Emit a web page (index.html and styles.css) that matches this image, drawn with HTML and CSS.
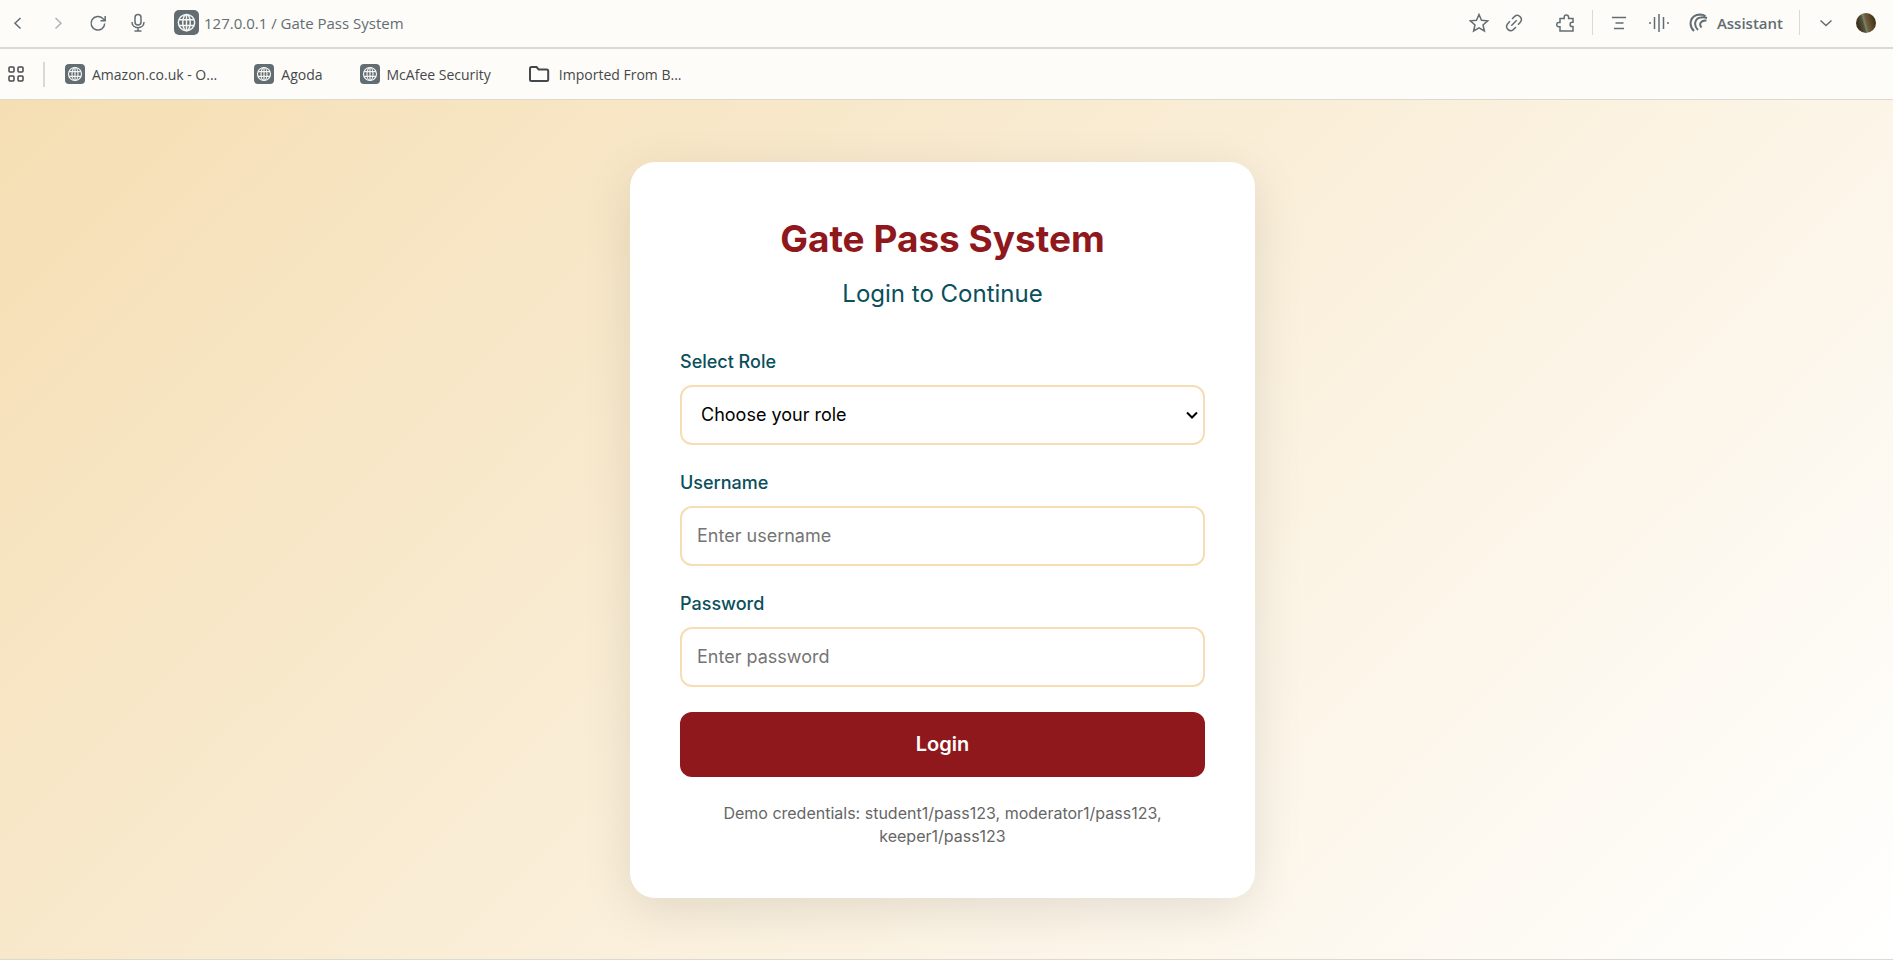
FILE: index.html
```html
<!DOCTYPE html>
<html lang="en">
<head>
<meta charset="utf-8">
<title>Gate Pass System</title>
<link rel="stylesheet" href="styles.css">
</head>
<body>
<svg class="defs" aria-hidden="true">
  <symbol id="globe" viewBox="0 0 20 20">
    <rect width="20" height="20" rx="4" fill="#626d73"/>
    <g fill="none" stroke="#f4f4f1" stroke-width="1.2">
      <circle cx="10" cy="10" r="6.5"/>
      <ellipse cx="10" cy="10" rx="3" ry="6.5"/>
      <path d="M10 3.5v13M4 7.7h12M4 12.3h12"/>
    </g>
  </symbol>
</svg>

<header class="browser">
  <div class="toolbar">
    <nav class="nav-buttons" aria-label="Navigation">
      <button class="icon-button" type="button" aria-label="Back"><svg viewBox="0 0 20 20"><path d="M12.500 5 7 10.200l5.500 5.300"/></svg></button>
      <button class="icon-button is-disabled" type="button" aria-label="Forward"><svg viewBox="0 0 20 20"><path d="m7.500 5 5.500 5.200-5.500 5.300"/></svg></button>
      <button class="icon-button" type="button" aria-label="Reload"><svg viewBox="0 0 20 20"><path d="M16.700 10.500A6.800 6.800 0 1 1 14.800 5.500L17 7.300M17.200 3v4.700h-4.700"/></svg></button>
      <button class="icon-button" type="button" aria-label="Voice search"><svg viewBox="0 0 20 20"><rect x="7" y="1.500" width="6" height="10.500" rx="3"/><path d="M4 9c0 7.500 12 7.500 12 0M10 14.800v3M6.500 18h7"/></svg></button>
    </nav>
    <div class="address">
      <svg class="site-icon"><use href="#globe"/></svg>
      <span>127.0.0.1 / Gate Pass System</span>
    </div>
    <div class="tools">
      <button class="icon-button star" type="button" aria-label="Bookmark"><svg viewBox="0 0 20 20"><path d="m10 1.500 2.500 5.700 6.200.6-4.700 4.100 1.400 6.100L10 14.800 4.600 18 6 11.900 1.300 7.800l6.200-.6z"/></svg></button>
      <button class="icon-button link" type="button" aria-label="Copy link"><svg viewBox="0 0 20 20"><path d="m7.300 12.700 5.400-5.400M8 6l2.700-2.600c3.600-3 8.600 1.700 5.800 5.600L14 11.700M6 8.300 3.500 11c-2.800 3.900 2 8.600 5.800 5.600L12 14"/></svg></button>
      <button class="icon-button puzzle" type="button" aria-label="Extensions"><svg viewBox="0 0 20 20"><path d="M4 5.500h4.200V4.200a2.200 2.200 0 0 1 4.400 0v1.300H17v3.800h-.8a2.100 2.100 0 0 0 0 4.200h.8V18H4v-4.200H2.800a2.100 2.100 0 0 1 0-4.200H4z"/></svg></button>
      <span class="divider"></span>
      <button class="icon-button lines" type="button" aria-label="Summarize"><svg viewBox="0 0 20 20"><path d="M3 4.500h14M6.500 10h8M5 15.500h10"/></svg></button>
      <button class="icon-button wave" type="button" aria-label="Voice"><svg viewBox="0 0 20 20"><path d="M10 1v18M5.500 4v12M14.500 4v12M1 9v2M19 9v2"/></svg></button>
      <button class="assistant" type="button">
        <svg viewBox="0 0 20 20"><path d="M5 18C-1 12 1 2 11 1.500q3 0 5.500 1.500M9 17C4 12 6 5 12 4.500q3-.5 6 .5M12.500 14.500C9.500 11 12 7 17.500 7.500"/></svg>
        Assistant
      </button>
      <span class="divider"></span>
      <button class="icon-button more" type="button" aria-label="More"><svg viewBox="0 0 20 20"><path d="m4.500 7.500 5.500 5 5.500-5"/></svg></button>
      <button class="avatar" type="button" aria-label="Profile"></button>
    </div>
  </div>
  <nav class="bookmarks" aria-label="Bookmarks">
    <button class="apps" type="button" aria-label="Apps"><svg viewBox="0 0 16 16"><rect x="1" y="1" width="5" height="5" rx="1"/><rect x="10" y="1" width="5" height="5" rx="1"/><rect x="1" y="10" width="5" height="5" rx="1"/><rect x="10" y="10" width="5" height="5" rx="1"/></svg></button>
    <span class="divider"></span>
    <a class="bookmark" href="#"><svg><use href="#globe"/></svg>Amazon.co.uk - O...</a>
    <a class="bookmark" href="#"><svg><use href="#globe"/></svg>Agoda</a>
    <a class="bookmark" href="#"><svg><use href="#globe"/></svg>McAfee Security</a>
    <a class="bookmark folder" href="#"><svg viewBox="0 0 22 18"><path d="M2 14.500V3.500q0-1.500 1.500-1.500h5l2.200 2.500h8q1.500 0 1.500 1.500v8.500q0 1.500-1.500 1.500h-15.200Q2 16 2 14.500z"/></svg>Imported From B...</a>
  </nav>
</header>

<main class="page">
  <form class="card">
    <h1>Gate Pass System</h1>
    <h2>Login to Continue</h2>
    <div class="field">
      <label for="role">Select Role</label>
      <select id="role"><option>Choose your role</option><option>Student</option><option>Moderator</option><option>Keeper</option></select>
    </div>
    <div class="field">
      <label for="username">Username</label>
      <input id="username" type="text" placeholder="Enter username">
    </div>
    <div class="field">
      <label for="password">Password</label>
      <input id="password" type="password" placeholder="Enter password">
    </div>
    <button class="login" type="submit">Login</button>
    <p class="demo">Demo credentials: student1/pass123, moderator1/pass123, keeper1/pass123</p>
  </form>
</main>
</body>
</html>
```
FILE: styles.css
```css
* { box-sizing: border-box; }

body {
  margin: 0;
  min-height: 100vh;
  display: flex;
  flex-direction: column;
  font-family: Inter, "Liberation Sans", sans-serif;
}

button { font: inherit; color: inherit; padding: 0; border: 0; background: none; cursor: pointer; }
.defs { position: absolute; width: 0; height: 0; }

/* Browser bars */
.browser {
  background: #fdfcf8;
  color: #626d73;
  font-family: "Open Sans", "Noto Sans", sans-serif;
}
.browser svg { display: block; flex: none; }

.toolbar {
  display: flex;
  align-items: center;
  height: 49px;
  padding: 0 17px 2px 8px;
  border-bottom: 2px solid #dadad2;
}
.nav-buttons { display: flex; gap: 20px; }
.icon-button svg, .assistant svg, .apps svg, .folder svg {
  fill: none;
  stroke: #626d73;
  stroke-width: 1.5;
}
.icon-button svg { width: 20px; height: 20px; }
.is-disabled { opacity: 0.5; }

.address {
  display: flex;
  align-items: center;
  gap: 5px;
  margin-left: 26px;
  font-size: 15px;
}
.site-icon { width: 25px; height: 25px; }

.tools { display: flex; align-items: center; margin-left: auto; }
.link { margin-left: 15px; }
.puzzle { margin-left: 32px; }
.divider { width: 1px; height: 25px; background: #dadad2; }
.tools .divider { margin: 0 16px; }
.wave { margin-left: 20px; }
.assistant {
  display: flex;
  align-items: center;
  gap: 8px;
  margin-left: 20px;
  font-size: 15px;
  font-weight: 600;
}
.assistant svg { width: 20px; height: 20px; stroke-width: 2; }
.avatar {
  width: 20px;
  height: 20px;
  margin-left: 20px;
  border-radius: 50%;
  background: linear-gradient(75deg, #3a2f1c 15%, #5a5238 38%, #6b8a7c 45%, #75603e 52%, #3d2f14 90%);
}

.bookmarks {
  display: flex;
  align-items: center;
  height: 51px;
  padding: 0 8px;
  border-bottom: 1px solid #dadad2;
  color: #45484b;
  font-size: 14px;
}
.apps svg { width: 16px; height: 16px; stroke: #45484b; }
.bookmarks .divider { width: 2px; margin: 0 20px 0 19px; }
.bookmark {
  display: flex;
  align-items: center;
  gap: 7px;
  margin-right: 37px;
  color: inherit;
  text-decoration: none;
}
.bookmark svg { width: 20px; height: 20px; }
.folder { gap: 9px; }
.folder svg { width: 22px; height: 18px; stroke: #45484b; stroke-width: 2; }

/* Login page */
.page {
  flex: 1;
  display: flex;
  align-items: center;
  justify-content: center;
  padding: 24px 8px 24px 0;
  border-bottom: 1px solid #dadad2;
  background: linear-gradient(135deg, #f5deb3 0%, #ffffff 100%);
}
.card {
  width: 625px;
  padding: 50px;
  border-radius: 25px;
  background: #ffffff;
  box-shadow: 0 12px 50px rgba(0, 0, 0, 0.1);
}
.card h1 {
  margin: 0;
  color: #8f181c;
  font-size: 37px;
  line-height: 54px;
  font-weight: 700;
  text-align: center;
}
.card h2 {
  margin: 11px 0 38px;
  color: #0a4f5c;
  font-size: 24px;
  line-height: 34px;
  font-weight: 400;
  text-align: center;
}
.field { margin-bottom: 25px; }
.field label {
  display: block;
  margin-bottom: 10px;
  color: #0a4f5c;
  font-size: 18px;
  line-height: 26px;
  font-weight: 500;
}
.field input, .field select {
  display: block;
  width: 100%;
  height: 60px;
  padding: 0 15px;
  border: 2px solid #f5deb3;
  border-radius: 12px;
  background: #ffffff;
  color: #000000;
  font-family: inherit;
  font-size: 18px;
}
.field select {
  appearance: none;
  padding: 0 24px 0 19px;
  background: #ffffff url("data:image/svg+xml,%3Csvg xmlns='http://www.w3.org/2000/svg' width='12' height='8' viewBox='0 0 12 8'%3E%3Cpath d='M1 1.500 6 6.500 11 1.500' fill='none' stroke='%23000' stroke-width='2'/%3E%3C/svg%3E") no-repeat right 5px center;
}
.field input::placeholder { color: #757575; }
.login {
  width: 100%;
  height: 65px;
  border-radius: 12px;
  background: #8f181c;
  color: #ffffff;
  font-size: 20px;
  font-weight: 600;
}
.demo {
  margin: 25px 0 0;
  color: #666666;
  font-size: 16px;
  line-height: 23px;
  text-align: center;
}
```
